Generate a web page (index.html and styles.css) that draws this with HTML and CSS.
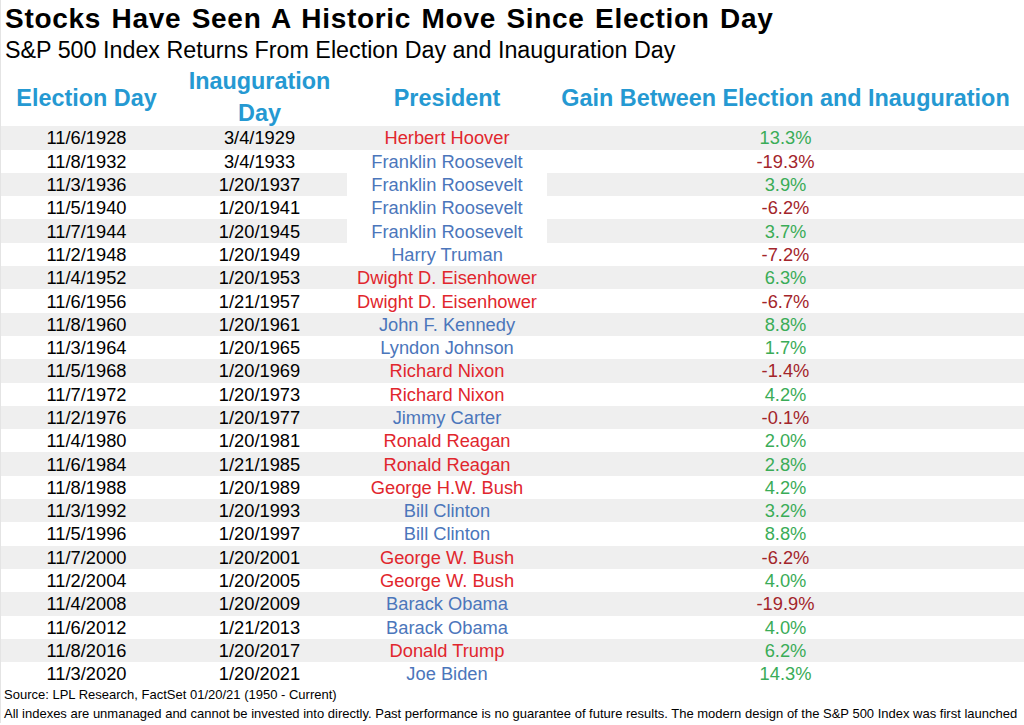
FILE: index.html
```html
<!DOCTYPE html>
<html>
<head>
<meta charset="utf-8">
<link rel="stylesheet" href="styles.css">
</head>
<body>
<div class="page">
  <h1 class="title">Stocks Have Seen A Historic Move Since Election Day</h1>
  <div class="subtitle">S&amp;P 500 Index Returns From Election Day and Inauguration Day</div>
  <div class="table">
    <div class="row head">
      <div class="cell one">Election Day</div>
      <div class="cell two">Inauguration<br>Day</div>
      <div class="cell one">President</div>
      <div class="cell one">Gain Between Election and Inauguration</div>
    </div>
    <div class="row alt"><div class="cell">11/6/1928</div><div class="cell">3/4/1929</div><div class="cell r">Herbert Hoover</div><div class="cell up">13.3%</div></div>
    <div class="row"><div class="cell">11/8/1932</div><div class="cell">3/4/1933</div><div class="cell d">Franklin Roosevelt</div><div class="cell down">-19.3%</div></div>
    <div class="row alt"><div class="cell">11/3/1936</div><div class="cell">1/20/1937</div><div class="cell d blank">Franklin Roosevelt</div><div class="cell up">3.9%</div></div>
    <div class="row"><div class="cell">11/5/1940</div><div class="cell">1/20/1941</div><div class="cell d">Franklin Roosevelt</div><div class="cell down">-6.2%</div></div>
    <div class="row alt"><div class="cell">11/7/1944</div><div class="cell">1/20/1945</div><div class="cell d blank">Franklin Roosevelt</div><div class="cell up">3.7%</div></div>
    <div class="row"><div class="cell">11/2/1948</div><div class="cell">1/20/1949</div><div class="cell d">Harry Truman</div><div class="cell down">-7.2%</div></div>
    <div class="row alt"><div class="cell">11/4/1952</div><div class="cell">1/20/1953</div><div class="cell r">Dwight D. Eisenhower</div><div class="cell up">6.3%</div></div>
    <div class="row"><div class="cell">11/6/1956</div><div class="cell">1/21/1957</div><div class="cell r">Dwight D. Eisenhower</div><div class="cell down">-6.7%</div></div>
    <div class="row alt"><div class="cell">11/8/1960</div><div class="cell">1/20/1961</div><div class="cell d">John F. Kennedy</div><div class="cell up">8.8%</div></div>
    <div class="row"><div class="cell">11/3/1964</div><div class="cell">1/20/1965</div><div class="cell d">Lyndon Johnson</div><div class="cell up">1.7%</div></div>
    <div class="row alt"><div class="cell">11/5/1968</div><div class="cell">1/20/1969</div><div class="cell r">Richard Nixon</div><div class="cell down">-1.4%</div></div>
    <div class="row"><div class="cell">11/7/1972</div><div class="cell">1/20/1973</div><div class="cell r">Richard Nixon</div><div class="cell up">4.2%</div></div>
    <div class="row alt"><div class="cell">11/2/1976</div><div class="cell">1/20/1977</div><div class="cell d">Jimmy Carter</div><div class="cell down">-0.1%</div></div>
    <div class="row"><div class="cell">11/4/1980</div><div class="cell">1/20/1981</div><div class="cell r">Ronald Reagan</div><div class="cell up">2.0%</div></div>
    <div class="row alt"><div class="cell">11/6/1984</div><div class="cell">1/21/1985</div><div class="cell r">Ronald Reagan</div><div class="cell up">2.8%</div></div>
    <div class="row"><div class="cell">11/8/1988</div><div class="cell">1/20/1989</div><div class="cell r">George H.W. Bush</div><div class="cell up">4.2%</div></div>
    <div class="row alt"><div class="cell">11/3/1992</div><div class="cell">1/20/1993</div><div class="cell d">Bill Clinton</div><div class="cell up">3.2%</div></div>
    <div class="row"><div class="cell">11/5/1996</div><div class="cell">1/20/1997</div><div class="cell d">Bill Clinton</div><div class="cell up">8.8%</div></div>
    <div class="row alt"><div class="cell">11/7/2000</div><div class="cell">1/20/2001</div><div class="cell r">George W. Bush</div><div class="cell down">-6.2%</div></div>
    <div class="row"><div class="cell">11/2/2004</div><div class="cell">1/20/2005</div><div class="cell r">George W. Bush</div><div class="cell up">4.0%</div></div>
    <div class="row alt"><div class="cell">11/4/2008</div><div class="cell">1/20/2009</div><div class="cell d">Barack Obama</div><div class="cell down">-19.9%</div></div>
    <div class="row"><div class="cell">11/6/2012</div><div class="cell">1/21/2013</div><div class="cell d">Barack Obama</div><div class="cell up">4.0%</div></div>
    <div class="row alt"><div class="cell">11/8/2016</div><div class="cell">1/20/2017</div><div class="cell r">Donald Trump</div><div class="cell up">6.2%</div></div>
    <div class="row"><div class="cell">11/3/2020</div><div class="cell">1/20/2021</div><div class="cell d">Joe Biden</div><div class="cell up">14.3%</div></div>
  </div>
  <div class="notes">
    <div class="note">Source: LPL Research, FactSet 01/20/21 (1950 - Current)</div>
    <div class="note">All indexes are unmanaged and cannot be invested into directly. Past performance is no guarantee of future results. The modern design of the S&amp;P 500 Index was first launched</div>
  </div>
</div>
</body>
</html>
```

FILE: styles.css
```css
html, body {
  margin: 0;
  padding: 0;
  background: #ffffff;
}
body {
  font-family: "Liberation Sans", Arial, sans-serif;
  color: #000;
  width: 1024px;
  height: 725px;
  overflow: hidden;
}
.page {
  display: flex;
  flex-direction: column;
  border-left: 1px solid #e4e4e4;
}
.title {
  margin: 0;
  padding: 4px 0 0 4px;
  font-size: 28px;
  font-weight: bold;
  letter-spacing: 0.7px;
  word-spacing: 2px;
  line-height: 30px;
  white-space: nowrap;
}
.subtitle {
  margin-top: 3px;
  padding-left: 4px;
  font-size: 23.3px;
  line-height: 26px;
  white-space: nowrap;
}
.table {
  display: flex;
  flex-direction: column;
}
.row {
  display: grid;
  grid-template-columns: 171px 175px 200px 1fr;
  height: 23.3px;
  align-items: center;
  font-size: 18.3px;
  line-height: 23px;
  text-align: center;
}
.row.alt {
  background: #efefef;
}
.cell {
  white-space: nowrap;
  height: 100%;
  display: flex;
  align-items: center;
  justify-content: center;
}
.cell.blank {
  background: #ffffff;
}
.row.head {
  height: 63.3px;
  font-size: 23.4px;
  font-weight: bold;
  line-height: 32px;
  color: #2599d2;
}
.row.head .cell {
  align-items: flex-start;
  box-sizing: border-box;
}
.row.head .cell.one {
  padding-top: 18.5px;
}
.row.head .cell.two {
  padding-top: 1.5px;
}
.r { color: #e1262d; }
.d { color: #4b76bb; }
.up { color: #3aac57; }
.down { color: #a3252b; }
.notes {
  padding: 0 0 0 3px;
  font-size: 13px;
  line-height: 19px;
  color: #000;
}
.note {
  white-space: nowrap;
}
```
